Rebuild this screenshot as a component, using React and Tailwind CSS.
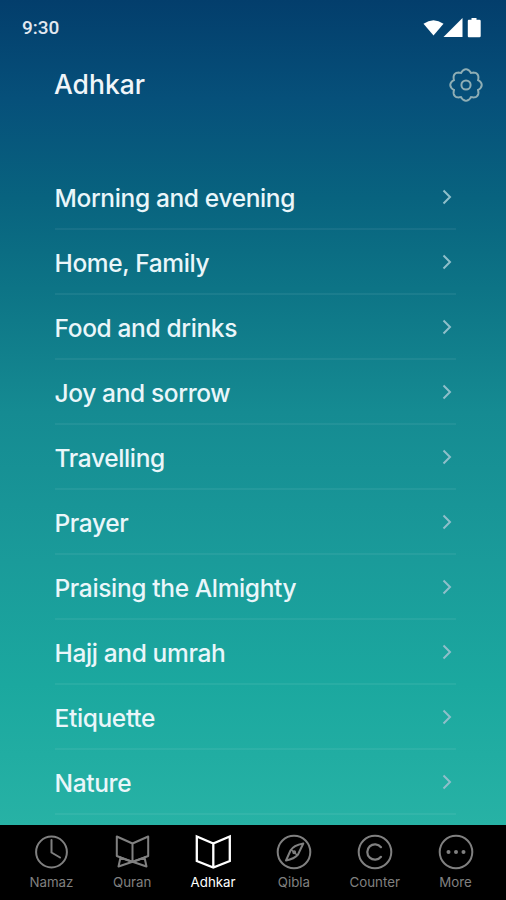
import React, { useState } from "react";

const categories = [
  "Morning and evening",
  "Home, Family",
  "Food and drinks",
  "Joy and sorrow",
  "Travelling",
  "Prayer",
  "Praising the Almighty",
  "Hajj and umrah",
  "Etiquette",
  "Nature",
];

const TabIcon = ({ children }) => (
  <svg
    width="36"
    height="36"
    viewBox="0 0 36 36"
    fill="none"
    stroke="currentColor"
    strokeWidth="2"
    strokeLinejoin="round"
    strokeLinecap="round"
  >
    {children}
  </svg>
);

const tabs = [
  {
    name: "Namaz",
    icon: (
      <>
        <circle cx="18.5" cy="18" r="15.4" />
        <path d="M18.5 6V18.5L27 23.5" />
      </>
    ),
  },
  {
    name: "Quran",
    icon: (
      <>
        <path d="M18.5 9.5 2.8 2.5V22L18.5 28 34.2 22V2.5L18.5 9.5V28" />
        <path d="M6.5 23.5 4.5 32.5 31 23.5M30.5 23.5 32.5 32.5 6 23.5" />
      </>
    ),
  },
  {
    name: "Adhkar",
    icon: (
      <path
        d="M18.3 9.5 1.8 2.5V27L18.3 33.5 34.8 27V2.5L18.3 9.5V33.5"
        strokeWidth="2.3"
        strokeLinejoin="miter"
      />
    ),
  },
  {
    name: "Qibla",
    icon: (
      <>
        <circle cx="18" cy="18" r="16.3" />
        <path d="M27.3 9.5C22 10.5 16.5 13 14.5 16.5L10 26.5C15.5 25.5 19.500 23.5 22 20.5Z" />
        <path d="M15.5 16 20.5 20.5" strokeWidth="1.5" />
        <circle cx="18.2" cy="18.2" r="1.2" strokeWidth="1.5" />
      </>
    ),
  },
  {
    name: "Counter",
    icon: (
      <>
        <circle cx="18" cy="18" r="16.3" />
        <path d="M24 13.2a7.7 7.7 0 1 0 0 9.6" strokeWidth="2.2" />
      </>
    ),
  },
  {
    name: "More",
    icon: (
      <>
        <circle cx="18" cy="18" r="16.3" />
        <g fill="currentColor" stroke="none">
          <circle cx="10.5" cy="18" r="2" />
          <circle cx="18" cy="18" r="2" />
          <circle cx="25.5" cy="18" r="2" />
        </g>
      </>
    ),
  },
];

const StatusBar = () => (
  <div className="flex h-14 items-center justify-between pl-[22px] pr-[25px]">
    <span className="font-[Roboto] text-[19px] font-medium text-slate-200">
      9:30
    </span>
    <svg width="58" height="20" viewBox="0 0 58 20" fill="white">
      <path d="M.5 5.8Q10.5-1.5 20.5 5.8L10.5 17.5Z" />
      <path d="M39.5 0V19H20.5Z" />
      <path d="M45.5 1.8h3V0h5v1.8h3a1.2 1.2 0 0 1 1.2 1.2V18a1.2 1.2 0 0 1-1.2 1.2h-11A1.2 1.2 0 0 1 44.8 18V3a1.2 1.2 0 0 1 .7-1.2Z" />
    </svg>
  </div>
);

// eight rounded teeth around the centre
const gearPoints = Array.from({ length: 160 }, (_, i) => {
  const a = (i / 160) * Math.PI * 2;
  const r = 12.9 + 2.8 * Math.abs(Math.cos(4 * a));
  return `${(17 + r * Math.cos(a)).toFixed(2)},${(17 + r * Math.sin(a)).toFixed(2)}`;
}).join(" ");

const GearIcon = () => (
  <svg
    width="34"
    height="34"
    viewBox="0 0 34 34"
    fill="none"
    stroke="currentColor"
    strokeWidth="2"
    strokeLinejoin="round"
  >
    <polygon points={gearPoints} />
    <circle cx="17" cy="17" r="4.6" />
  </svg>
);

const App = () => {
  const [active, setActive] = useState("Adhkar");

  return (
    <div className="flex h-[900px] w-full flex-col overflow-hidden bg-black font-[Inter,sans-serif]">
      <div className="flex h-[825px] flex-col bg-[linear-gradient(180deg,#033e6c_0%,#06507a_12%,#08637f_24%,#0d7486_35%,#158b92_50%,#1a9b9a_68%,#1ba89f_83%,#27b2a5_100%)]">
        <StatusBar />

        <header className="flex h-[58px] items-center justify-between pl-[54px] pr-[23px]">
          <h1 className="-mt-px text-[26.5px] font-medium text-slate-100">
            Adhkar
          </h1>
          <button aria-label="Settings" className="text-[#8faeb5]">
            <GearIcon />
          </button>
        </header>

        <ul className="mt-[51px] pl-[55px] pr-[50px]">
          {categories.map((ele) => (
            <li
              key={ele}
              className="flex h-[65px] items-center justify-between border-b-2 border-white/6"
            >
              <span className="-ml-[0.5px] pt-[3px] text-[24.5px] font-medium tracking-[-0.36px] text-[#eaf6fa] [font-variant-ligatures:none]">
                {ele}
              </span>
              <svg
                className="mr-1 mt-px text-[#8fbfca]"
                width="10"
                height="16"
                viewBox="0 0 10 16"
                fill="none"
                stroke="currentColor"
                strokeWidth="2"
              >
                <path d="M1.5 1.5 8 8l-6.5 6.5" />
              </svg>
            </li>
          ))}
        </ul>
      </div>

      {/* bottom tabs */}
      <nav className="flex h-[75px] justify-between pl-[11px] pr-[10px]">
        {tabs.map((tab) => (
          <button
            key={tab.name}
            onClick={() => setActive(tab.name)}
            className={`flex w-[81px] flex-col items-center pt-[9px] ${
              active === tab.name ? "text-white" : "text-[#808080]"
            }`}
          >
            <TabIcon>{tab.icon}</TabIcon>
            <span className="mt-[4px] text-[13.3px] leading-4">{tab.name}</span>
          </button>
        ))}
      </nav>
    </div>
  );
};

export default App;
